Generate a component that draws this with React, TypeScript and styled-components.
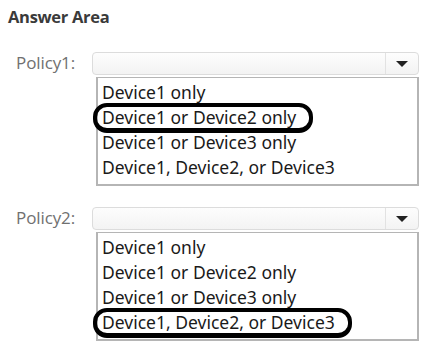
import React from 'react'
import styled, { createGlobalStyle } from 'styled-components'

const GlobalStyle = createGlobalStyle`
  html, body {
    margin: 0;
    padding: 0;
    background: #fff;
  }
  body {
    font-family: "Noto Sans", "Open Sans", sans-serif;
  }
`

const options = [
  'Device1 only',
  'Device1 or Device2 only',
  'Device1 or Device3 only',
  'Device1, Device2, or Device3',
]

const policies = [
  { name: 'Policy1:', marked: 1 },
  { name: 'Policy2:', marked: 3 },
]

const Page = styled.div`
  width: 430px;
  height: 352px;
  box-sizing: border-box;
  padding: 7px 11px 0 8px;
  overflow: hidden;
`

const Title = styled.div`
  font-family: "Open Sans", sans-serif;
  font-size: 16.5px;
  font-weight: 700;
  color: #3a3a3a;
  letter-spacing: -0.3px;
  line-height: 20px;
`

const Group = styled.div`
  display: grid;
  grid-template-columns: 84px 1fr;
  margin-top: 25px;

  & + & {
    margin-top: 21px;
  }
`

const Label = styled.div`
  font-family: "Open Sans", sans-serif;
  font-size: 17px;
  color: #707070;
  height: 22px;
  line-height: 22px;
  padding-left: 8px;
  letter-spacing: -0.1px;
`

const Controls = styled.div`
  display: flex;
  flex-direction: column;
`

const Select = styled.div`
  display: flex;
  height: 21px;
  border: 1px solid #dcdcdc;
  border-radius: 4px;
  background: linear-gradient(#fdfdfd, #f3f3f3);
`

const SelectValue = styled.div`
  flex: 1;
`

const Arrow = styled.div`
  width: 32px;
  border-left: 1px solid #e2e2e2;
  display: flex;
  align-items: center;
  justify-content: center;

  &::after {
    content: '';
    border-left: 6px solid transparent;
    border-right: 6px solid transparent;
    border-top: 6px solid #222;
    margin-top: 1px;
  }
`

const List = styled.div`
  margin-top: 2px;
  margin-left: 4px;
  border: 2px solid #b5b5b5;
  border-top-width: 1px;
  padding: 2px 0 5px 4px;
  height: 109px;
  box-sizing: border-box;
`

const Item = styled.div<{ $marked?: boolean }>`
  position: relative;
  font-size: 17.5px;
  color: #1a1a1a;
  line-height: 25px;
  height: 25px;
  white-space: nowrap;
  width: max-content;

  ${p =>
    p.$marked &&
    `
    &::before {
      content: '';
      position: absolute;
      left: -9px;
      right: -17px;
      top: -2px;
      bottom: -3px;
      border: 4px solid #000;
      border-bottom-width: 5px;
      border-radius: 14px;
    }
  `}
`

const App = () => {
  return (
    <Page>
      <GlobalStyle />
      <Title>Answer Area</Title>
      {policies.map(p => (
        <Group key={p.name}>
          <Label>{p.name}</Label>
          <Controls>
            <Select>
              <SelectValue />
              <Arrow />
            </Select>
            <List>
              {options.map((o, i) => (
                <Item key={o} $marked={i === p.marked}>
                  {o}
                </Item>
              ))}
            </List>
          </Controls>
        </Group>
      ))}
    </Page>
  )
}

export default App
